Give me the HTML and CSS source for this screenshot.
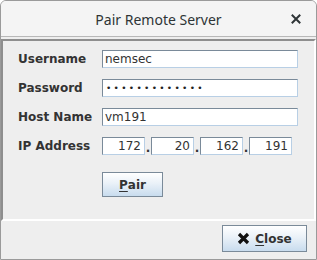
FILE: index.html
```html
<!DOCTYPE html>
<html>
<head>
<meta charset="utf-8">
<link rel="stylesheet" href="styles.css">
</head>
<body>
<div class="window">
  <div class="titlebar">
    <span class="title">Pair Remote Server</span>
    <span class="close-x">
      <svg width="10" height="10" viewBox="0 0 10 10"><path d="M1.5 1.5L8.5 8.5M8.5 1.5L1.5 8.5" stroke="#2e3436" stroke-width="2" stroke-linecap="square"/></svg>
    </span>
  </div>
  <div class="content">
    <div class="panel">
      <div class="form">
        <label class="lbl">Username</label>
        <div class="field">nemsec</div>
        <label class="lbl">Password</label>
        <div class="field pw"><span class="bullets">•••••••••••••</span></div>
        <label class="lbl">Host Name</label>
        <div class="field">vm191</div>
        <label class="lbl">IP Address</label>
        <div class="ip">
          <div class="oct">172</div><span class="dot">.</span>
          <div class="oct">20</div><span class="dot">.</span>
          <div class="oct">162</div><span class="dot">.</span>
          <div class="oct">191</div>
        </div>
        <span></span>
        <div class="pair-row"><button class="btn pair"><u>P</u>air</button></div>
      </div>
    </div>
    <div class="footer">
      <button class="btn close"><svg width="13" height="13" viewBox="0 0 13 13"><path d="M2 2L11 11M11 2L2 11" stroke="#111" stroke-width="3.2" stroke-linecap="butt"/></svg><span><u>C</u>lose</span></button>
    </div>
  </div>
</div>
</body>
</html>
```
FILE: styles.css
```css
html, body {
  margin: 0;
  padding: 0;
  background: #ffffff;
}
.window {
  width: 317px;
  height: 260px;
  box-sizing: border-box;
  border: 1px solid #9a9a9a;
  border-radius: 6px 6px 0 0;
  background: #eeeeee;
  display: flex;
  flex-direction: column;
  overflow: hidden;
}
.titlebar {
  height: 35px;
  flex: none;
  background: #f4f4f4;
  border-bottom: 1px solid #b8b8b8;
  position: relative;
  display: flex;
  align-items: center;
  justify-content: center;
  font-family: "Noto Sans", "DejaVu Sans", sans-serif;
  font-size: 14px;
  color: #2e3436;
}
.title {
  margin-top: 1px;
}
.close-x {
  position: absolute;
  right: 15px;
  top: 13px;
  line-height: 0;
}
.content {
  flex: 1;
  display: flex;
  flex-direction: column;
  padding-top: 2px;
}
.panel {
  height: 182px;
  flex: none;
  box-sizing: border-box;
  border-top: 2px solid #8e8e8e;
  border-left: 2px solid #8e8e8e;
  border-right: 2px solid #ffffff;
  border-bottom: 2px solid #ffffff;
}
.form {
  display: grid;
  grid-template-columns: 84px 196px;
  grid-auto-rows: 18px;
  row-gap: 11px;
  padding: 9px 0 0 15px;
  align-items: center;
}
.lbl {
  font-family: "DejaVu Sans", sans-serif;
  font-weight: bold;
  font-size: 12px;
  color: #333333;
}
.field {
  height: 18px;
  box-sizing: border-box;
  border: 1px solid #7a8a99;
  border-right-color: #b8cfe5;
  border-bottom-color: #b8cfe5;
  background: #ffffff;
  font-family: "DejaVu Sans", sans-serif;
  font-size: 12px;
  color: #333333;
  padding: 0 2px;
  line-height: 16px;
}
.pw {
  display: flex;
  align-items: center;
  padding-left: 3px;
}
.bullets {
  font-family: "DejaVu Sans", sans-serif;
  font-size: 9px;
  line-height: 9px;
  letter-spacing: 2.3px;
  color: #222222;
}
.ip {
  display: flex;
  align-items: flex-end;
  height: 18px;
}
.oct {
  width: 43px;
  height: 18px;
  box-sizing: border-box;
  border: 1px solid #7a8a99;
  border-right-color: #b8cfe5;
  border-bottom-color: #b8cfe5;
  background: #ffffff;
  font-family: "DejaVu Sans", sans-serif;
  font-size: 12px;
  color: #333333;
  text-align: right;
  padding-right: 3px;
  line-height: 16px;
}
.dot {
  width: 6px;
  text-align: center;
  font-family: "DejaVu Sans", sans-serif;
  font-weight: bold;
  font-size: 12px;
  color: #333;
  line-height: 14px;
}
.pair-row {
  height: 25px;
  align-self: start;
  margin-top: 6px;
}
.btn {
  box-sizing: border-box;
  border: 1px solid #7a8a99;
  background: linear-gradient(#ffffff 0%, #eaf1f8 45%, #c8dcee 100%);
  font-family: "DejaVu Sans", sans-serif;
  font-weight: bold;
  font-size: 12px;
  color: #333333;
  padding: 0;
  display: flex;
  align-items: center;
  justify-content: center;
}
.btn u {
  text-underline-offset: 2px;
}
.pair {
  width: 61px;
  height: 25px;
}
.footer {
  flex: 1;
  display: flex;
  justify-content: flex-end;
  align-items: flex-start;
  padding: 4px 9px 0 0;
}
.close {
  width: 85px;
  height: 27px;
  gap: 5px;
}
.close svg {
  display: block;
}
```
